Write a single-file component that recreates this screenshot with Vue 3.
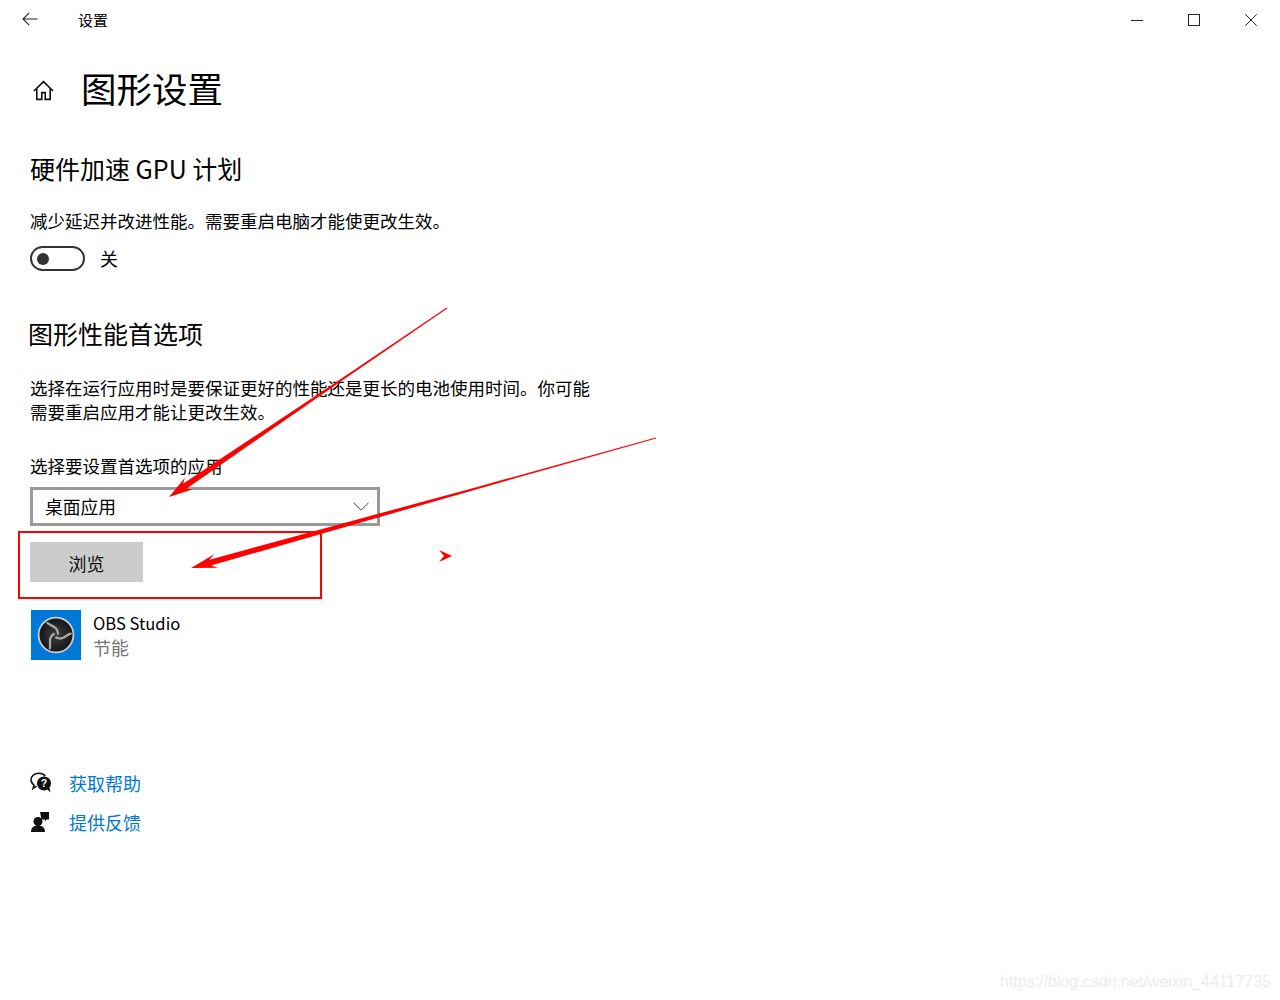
<script setup>
function fmt(p) {
  return p[0].toFixed(1) + ',' + p[1].toFixed(1);
}
function arrowPoints(tail, tip, thinUntil, headLen, barb, notch, baseWidth) {
  const dx = tail[0] - tip[0];
  const dy = tail[1] - tip[1];
  const len = Math.hypot(dx, dy);
  const ux = dx / len;
  const uy = dy / len;
  const nx = -uy;
  const ny = ux;
  const at = (along, side) => [tip[0] + ux * along + nx * side, tip[1] + uy * along + ny * side];
  const thin = len * thinUntil;
  return [
    at(len, 0.5),
    at(thin, 1),
    at(notch, baseWidth / 2),
    at(headLen, barb),
    tip,
    at(headLen, -barb),
    at(notch, -baseWidth / 2),
    at(thin, -1),
    at(len, -0.5),
  ].map(fmt).join(' ');
}
const arrows = [
  arrowPoints([447, 308], [169, 497], 0.6, 24, 7, 19, 6),
  arrowPoints([656, 438], [191, 568], 0.62, 26, 7, 20, 6),
];
const swirlAngles = [0, 120, 240];
</script>

<template>
  <div class="page">
    <header class="titlebar">
      <div class="titlebar-left">
        <svg class="back" width="16" height="14" viewBox="0 0 16 14" fill="none" stroke="#222" stroke-width="1.1">
          <path d="M15.5 7H1M7.2.8 1 7l6.2 6.2" />
        </svg>
        <span class="app-name">设置</span>
      </div>
      <div class="window-controls">
        <svg width="12" height="12" viewBox="0 0 12 12" fill="none" stroke="#222"><path d="M0 6.5h12" /></svg>
        <svg width="12" height="12" viewBox="0 0 12 12" fill="none" stroke="#222"><rect x=".5" y=".5" width="11" height="11" /></svg>
        <svg width="12" height="12" viewBox="0 0 12 12" fill="none" stroke="#222"><path d="M.3.3l11.4 11.4M11.700.3.3 11.700" /></svg>
      </div>
    </header>

    <main class="content">
      <div class="page-title">
        <svg class="home" width="23" height="23" viewBox="0 0 24 24" fill="none" stroke="#111" stroke-width="1.7">
          <path d="M2 12.500 12 2.800l10 9.700M5 10v11.200h5.200v-7h3.600v7H19V10" />
        </svg>
        <h1>图形设置</h1>
      </div>

      <section class="gpu">
        <h2>硬件加速 GPU 计划</h2>
        <p class="gpu-text">减少延迟并改进性能。需要重启电脑才能使更改生效。</p>
        <div class="toggle-row">
          <span class="toggle"><span class="knob"></span></span>
          <span class="toggle-label">关</span>
        </div>
      </section>

      <section class="prefs">
        <h2>图形性能首选项</h2>
        <p class="prefs-text">选择在运行应用时是要保证更好的性能还是更长的电池使用时间。你可能<br />需要重启应用才能让更改生效。</p>
        <label class="select-label">选择要设置首选项的应用</label>
        <div class="select">
          <span>桌面应用</span>
          <svg width="16" height="9" viewBox="0 0 16 9" fill="none" stroke="#444"><path d="M.5.800 8 8.200 15.500.800" /></svg>
        </div>
        <button class="browse" type="button">浏览</button>
        <div class="app-row">
          <div class="app-icon">
            <svg width="40" height="40" viewBox="0 0 40 40">
              <defs>
                <radialGradient id="obsFill" cx="50%" cy="50%" r="55%">
                  <stop offset="0" stop-color="#403e3f" />
                  <stop offset="1" stop-color="#111013" />
                </radialGradient>
              </defs>
              <circle cx="20" cy="20" r="17.400" fill="url(#obsFill)" stroke="#c8cccf" stroke-width="1.800" />
              <g fill="none" stroke="#aaaaaa" stroke-width="2.300" stroke-linecap="round">
                <path
                  v-for="angle in swirlAngles"
                  :key="angle"
                  d="M11.500 8C15 11.500 21.500 11 22 18.500"
                  :transform="`rotate(${angle} 20 20)`"
                />
              </g>
            </svg>
          </div>
          <div class="app-info">
            <div class="app-title">OBS Studio</div>
            <div class="app-mode">节能</div>
          </div>
        </div>
      </section>

      <nav class="links">
        <a class="link-row">
          <svg width="22" height="22" viewBox="0 0 22 22">
            <path d="M9 1.200C4.500 1.200 1 4.100 1 7.800c0 2.200 1.200 4 3 5.200l-1 3.500 3.600-2.300" fill="none" stroke="#111" stroke-width="1.500" />
            <path d="M9 1.200c2.800 0 5 1 6.400 2.800" fill="none" stroke="#111" stroke-width="1.500" />
            <circle cx="14" cy="11.500" r="7" fill="#111" />
            <path d="m17 17 3.500 3.500-1-5z" fill="#111" />
            <text x="14" y="15.200" text-anchor="middle" class="qmark">?</text>
          </svg>
          <span>获取帮助</span>
        </a>
        <a class="link-row">
          <svg width="22" height="22" viewBox="0 0 22 22" fill="#111">
            <circle cx="8" cy="10.500" r="4.500" />
            <path d="M1 21c0-4.500 3-6.500 7-6.500s7 2 7 6.500z" />
            <path d="M10 1h9v7.500h-2.500L15 10.500v-2h-3.500z" />
          </svg>
          <span>提供反馈</span>
        </a>
      </nav>
    </main>

    <footer class="watermark">https://blog.csdn.net/weixin_44117735</footer>

    <svg class="annotations" width="1280" height="1000" viewBox="0 0 1280 1000">
      <rect x="19" y="532" width="302" height="66" fill="none" stroke="#f00" stroke-width="2" />
      <polygon v-for="(a, i) in arrows" :key="i" :points="a" fill="#f00" />
      <polygon points="439,550 452,556 439,562 444,556" fill="#f00" />
    </svg>
  </div>
</template>

<style scoped>
.page {
  position: relative;
  width: 1280px;
  height: 1000px;
  overflow: hidden;
  background: #fff;
  color: #000;
  font-family: "Noto Sans CJK SC", "Noto Sans", sans-serif;
}
.titlebar {
  display: flex;
  justify-content: space-between;
  align-items: center;
  height: 40px;
  padding: 0 23px 0 22px;
}
.titlebar-left {
  display: flex;
  align-items: center;
  gap: 40px;
}
.back { margin-top: -2px; }
.app-name { font-size: 15px; line-height: 40px; }
.window-controls {
  display: flex;
  gap: 45px;
  align-items: center;
}
.content { padding: 0 0 0 30px; }
.page-title {
  display: flex;
  align-items: center;
  gap: 26px;
  height: 60px;
  margin-top: 18px;
}
.home { margin-left: 2px; margin-top: 4px; }
h1 {
  margin: 0;
  font-size: 35.500px;
  font-weight: 400;
  line-height: 60px;
}
h2 {
  margin: 0;
  font-size: 25px;
  font-weight: 400;
  line-height: 36px;
}
.gpu { margin-top: 32px; }
p { margin: 0; }
.gpu-text {
  margin-top: 23px;
  font-size: 17.500px;
  line-height: 24px;
}
.toggle-row {
  display: flex;
  align-items: center;
  gap: 15px;
  margin-top: 13px;
}
.toggle {
  display: flex;
  align-items: center;
  box-sizing: border-box;
  width: 55px;
  height: 25px;
  padding-left: 5px;
  border: 2px solid #333;
  border-radius: 13px;
}
.knob {
  width: 12px;
  height: 12px;
  border-radius: 50%;
  background: #333;
}
.toggle-label { font-size: 18px; line-height: 25px; }
.prefs { margin-top: 44px; margin-left: -2px; }
.prefs-text {
  margin: 25px 0 0 2px;
  font-size: 17.500px;
  line-height: 23.500px;
}
.select-label {
  display: block;
  margin: 30.500px 0 0 2px;
  font-size: 17.500px;
  line-height: 24px;
}
.select {
  display: flex;
  justify-content: space-between;
  align-items: center;
  box-sizing: border-box;
  width: 350px;
  height: 39px;
  margin: 9px 0 0 2px;
  padding: 0 8px 0 12px;
  border: 3px solid #999;
  font-size: 17.800px;
}
.select span { margin-top: -1px; }
.browse {
  display: block;
  width: 113px;
  height: 40px;
  margin: 16px 0 0 2px;
  padding: 2px 0 0;
  border: none;
  background: #ccc;
  color: #111;
  font-family: inherit;
  font-size: 18px;
}
.app-row {
  display: flex;
  gap: 12px;
  margin: 28px 0 0 3px;
}
.app-icon {
  display: flex;
  align-items: center;
  justify-content: center;
  width: 50px;
  height: 50px;
  background: #0078d7;
}
.app-title {
  font-size: 16.600px;
  line-height: 26px;
}
.app-mode {
  margin-top: -1px;
  color: #767676;
  font-size: 18px;
  line-height: 25px;
}
.links {
  display: flex;
  flex-direction: column;
  gap: 17px;
  margin-top: 112px;
}
.link-row {
  display: flex;
  align-items: center;
  gap: 17px;
  height: 22px;
  color: #0078d7;
  font-size: 18px;
}
.qmark {
  fill: #fff;
  font-family: "Liberation Sans", sans-serif;
  font-size: 10.500px;
  font-weight: 700;
}
.watermark {
  position: absolute;
  right: 9px;
  bottom: 8px;
  color: #ececec;
  font-family: "Liberation Sans", sans-serif;
  font-size: 16px;
  line-height: 20px;
}
.annotations {
  position: absolute;
  top: 0;
  left: 0;
  pointer-events: none;
}
</style>
